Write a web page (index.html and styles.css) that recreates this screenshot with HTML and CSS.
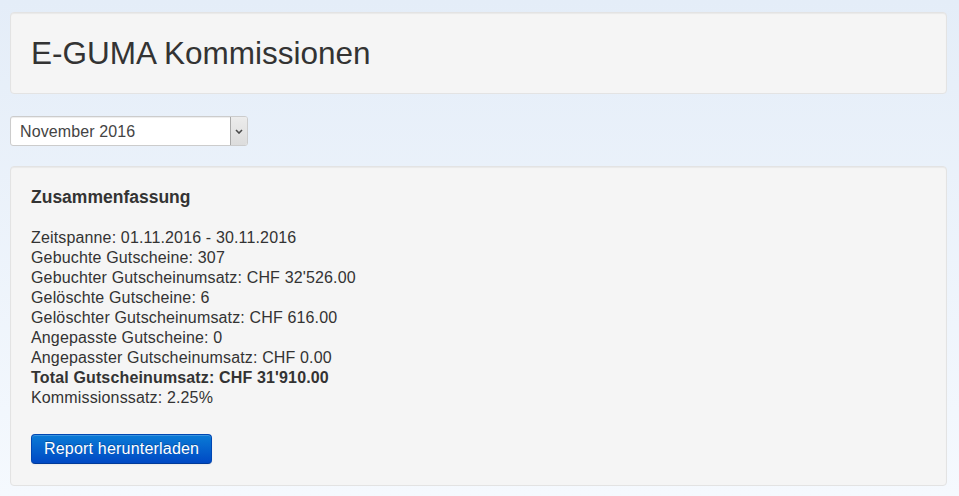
FILE: index.html
```html
<!DOCTYPE html>
<html lang="de">
<head>
    <meta charset="UTF-8">
    <meta name="viewport" content="width=device-width, initial-scale=1.0">
    <title>E-GUMA Kommissionen</title>
    <link rel="stylesheet" href="styles.css">
</head>
<body>
    <div class="page">
        <div class="well header">
            <h2>E-GUMA Kommissionen</h2>
        </div>

        <div class="select-box">
            <select name="month">
                <option>November 2016</option>
                <option>Oktober 2016</option>
                <option>September 2016</option>
            </select>
            <span class="arrow">
                <svg width="8" height="5" viewBox="0 0 8 5">
                    <path d="M1 1 L4 4 L7 1" fill="none" stroke="#4a4a4a" stroke-width="1.6"/>
                </svg>
            </span>
        </div>

        <div class="well summary">
            <h4>Zusammenfassung</h4>
            <p>
                Zeitspanne: 01.11.2016 - 30.11.2016<br>
                Gebuchte Gutscheine: 307<br>
                Gebuchter Gutscheinumsatz: CHF 32'526.00<br>
                Gelöschte Gutscheine: 6<br>
                Gelöschter Gutscheinumsatz: CHF 616.00<br>
                Angepasste Gutscheine: 0<br>
                Angepasster Gutscheinumsatz: CHF 0.00<br>
                <strong>Total Gutscheinumsatz: CHF 31'910.00</strong><br>
                Kommissionssatz: 2.25%
            </p>
            <button class="btn btn-primary">Report herunterladen</button>
        </div>
    </div>
</body>
</html>
```

FILE: styles.css
```css
html {
    min-height: 100%;
    background: linear-gradient(to bottom, #e4edf8 0%, #f5f9fe 100%);
}

body {
    margin: 0;
    padding: 0;
    color: #333;
    font-family: "Liberation Sans", Arial, sans-serif;
    font-size: 16px;
    line-height: 20px;
    letter-spacing: 0.15px;
}

.page {
    padding: 12px 12px 10px 10px;
}

.well {
    background-color: #f5f5f5;
    border: 1px solid #e3e3e3;
    border-radius: 4px;
    box-shadow: inset 0 1px 1px rgba(0, 0, 0, 0.05);
    padding: 20px;
}

.header h2 {
    margin: 0;
    font-size: 31.5px;
    line-height: 40px;
    font-weight: normal;
    letter-spacing: 0;
    color: #333;
}

.select-box {
    display: flex;
    width: 236px;
    height: 28px;
    margin: 22px 0 20px 0;
    background: #fff;
    border: 1px solid #ccc;
    border-radius: 3px;
    box-shadow: inset 0 1px 1px rgba(0, 0, 0, 0.075);
    overflow: hidden;
}

.select-box select {
    flex: 1;
    appearance: none;
    -webkit-appearance: none;
    border: none;
    background: transparent;
    padding: 0 9px;
    font-family: "Liberation Sans", Arial, sans-serif;
    font-size: 16px;
    letter-spacing: 0.1px;
    color: #444;
    outline: none;
}

.select-box .arrow {
    width: 16px;
    display: flex;
    align-items: center;
    justify-content: center;
    background: linear-gradient(to bottom, #ececec, #dcdcdc);
    border-left: 1px solid #a9a9a9;
}

.summary h4 {
    margin: 0 0 21px 0;
    font-size: 17.5px;
    line-height: 20px;
    font-weight: bold;
    letter-spacing: 0;
}

.summary p {
    margin: 0 0 26px 0;
}

.summary {
    padding-bottom: 21px;
}

.btn {
    display: inline-block;
    padding: 4px 12px;
    font-family: "Liberation Sans", Arial, sans-serif;
    font-size: 16px;
    line-height: 20px;
    letter-spacing: 0.2px;
    border-radius: 4px;
    cursor: pointer;
}

.btn-primary {
    color: #fff;
    text-shadow: 0 -1px 0 rgba(0, 0, 0, 0.25);
    background: linear-gradient(to bottom, #0a7bd6, #0049c4);
    border: 1px solid #0047b3;
    border-bottom-color: #003a99;
    box-shadow: inset 0 1px 0 rgba(255, 255, 255, 0.2), 0 1px 2px rgba(0, 0, 0, 0.05);
}
```
